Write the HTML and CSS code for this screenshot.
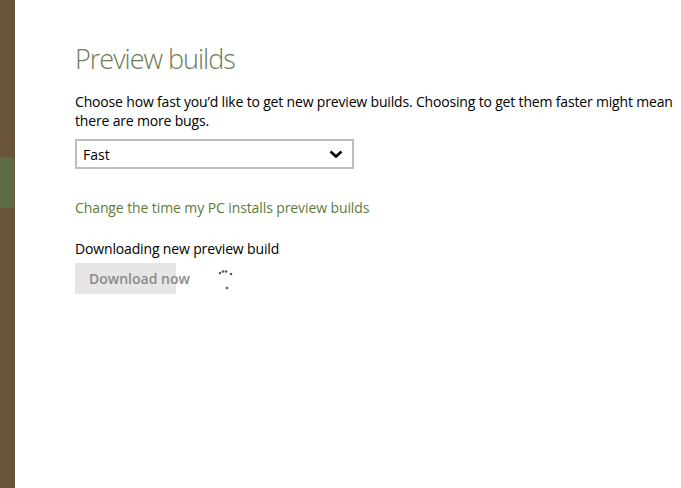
FILE: index.html
```html
<!DOCTYPE html>
<html>
<head>
<meta charset="utf-8">
<link rel="stylesheet" href="styles.css">
</head>
<body>
<div class="rail"><div class="rail-mark"></div></div>
<main class="main">
  <h1 class="title">Preview builds</h1>
  <p class="desc">Choose how fast you’d like to get new preview builds. Choosing to get them faster might mean there are more bugs.</p>
  <div class="select">
    <span class="select-value">Fast</span>
    <svg class="chevron" width="14" height="8" viewBox="0 0 14 8"><path d="M1.5 1.5 L7 6.5 L12.5 1.5" fill="none" stroke="#000" stroke-width="2.6"/></svg>
  </div>
  <a class="link">Change the time my PC installs preview builds</a>
  <p class="status">Downloading new preview build</p>
  <div class="actions">
    <div class="btn">Download now</div>
    <svg class="spinner" width="20" height="26" viewBox="0 0 20 26">
      <circle cx="3" cy="4" r="1.3" fill="#55604a"/>
      <circle cx="6" cy="2.5" r="1.3" fill="#55604a"/>
      <circle cx="9" cy="2.5" r="1.3" fill="#55604a"/>
      <circle cx="14" cy="5" r="1.3" fill="#55604a"/>
      <circle cx="10" cy="19" r="1.3" fill="#55604a"/>
    </svg>
  </div>
</main>
</body>
</html>
```
FILE: styles.css
```css
html, body {
  margin: 0;
  padding: 0;
  background: #fff;
}
body {
  display: flex;
  height: 488px;
  overflow: hidden;
  font-family: "Open Sans", "Noto Sans", sans-serif;
  color: #000;
}
.rail {
  width: 15px;
  flex: none;
  background: #6b553a;
}
.rail-mark {
  margin-top: 157px;
  width: 14px;
  height: 51px;
  background: #5b6b46;
}
.main {
  padding: 42px 0 0 60px;
  flex: 1;
  min-width: 0;
}
.title {
  margin: 0;
  font-weight: 300;
  font-size: 27px;
  line-height: 34px;
  letter-spacing: -1px;
  color: #6d7b57;
}
.desc {
  margin: 16px 0 0;
  font-size: 14px;
  line-height: 19px;
  letter-spacing: -0.17px;
  width: 600px;
}
.select {
  margin-top: 9px;
  box-sizing: border-box;
  width: 279px;
  height: 30px;
  border: 2px solid #bdbdbd;
  display: flex;
  align-items: center;
  justify-content: space-between;
  padding: 0 9px 0 6px;
  font-size: 14px;
}
.chevron {
  display: block;
}
.link {
  display: block;
  margin-top: 29px;
  font-size: 14px;
  line-height: 19px;
  letter-spacing: -0.1px;
  color: #5e7a3c;
}
.status {
  margin: 22px 0 0;
  font-size: 14px;
  line-height: 19px;
  letter-spacing: -0.15px;
}
.actions {
  margin-top: 5px;
  display: flex;
  align-items: flex-start;
}
.btn {
  width: 101px;
  height: 31px;
  box-sizing: border-box;
  background: #e6e6e6;
  color: #8a8a8a;
  font-size: 14px;
  font-weight: 600;
  line-height: 31px;
  padding-left: 14px;
  white-space: nowrap;
  overflow: visible;
}
.spinner {
  margin: 6px 0 0 41px;
  display: block;
}
```
